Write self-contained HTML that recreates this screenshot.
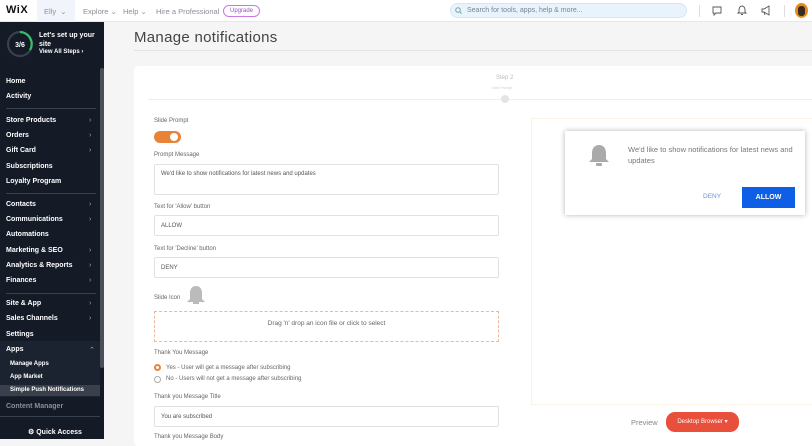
<!DOCTYPE html>
<html><head><meta charset="utf-8"><style>
*{box-sizing:border-box;margin:0;padding:0}
body{width:812px;height:439px;overflow:hidden;font-family:"Liberation Sans",sans-serif;background:#f5f5f5;position:relative}
.top{position:absolute;left:0;top:0;width:812px;height:22px;background:#fff;border-bottom:1px solid #e5e7ea;font-size:7.5px;color:#8a8f98}
.top span{position:absolute;top:7px}
.side{position:absolute;left:0;top:22px;width:104px;height:417px;background:#141a26;color:#fff;font-weight:bold;font-size:7px}
.side .it{position:absolute;left:6px}
.side .ch{position:absolute;left:89px;color:#9aa;font-weight:normal}
.side .ln{position:absolute;left:6px;width:90px;height:1px;background:#3a414e}
.sb{position:absolute;left:100px;top:45px;width:4px;height:300px;background:#4a505a;border-radius:2px}
.lbl{position:absolute;left:154px;font-size:6px;color:#666}
.inp{position:absolute;left:154px;width:345px;height:21px;border:1px solid #e2e2e2;border-radius:2px;background:#fff;font-size:6px;color:#555;padding:7px 6px}
.g{position:absolute;left:0;top:1px;width:104px;height:417px}
</style></head><body>
<div class="top">
<span style="left:6px;top:4px;font-size:11px;font-weight:bold;color:#111;letter-spacing:.5px">WiX</span>
<div style="position:absolute;left:37px;top:0;width:38px;height:22px;background:#f1f5fb"></div>
<span style="left:44px">Elly &nbsp;⌄</span>
<span style="left:83px">Explore ⌄</span>
<span style="left:123px">Help ⌄</span>
<span style="left:156px">Hire a Professional</span>
<span style="left:223px;top:5px;border:1px solid #c67ae0;color:#a04cc6;border-radius:7px;padding:2px 6px;font-size:6px">Upgrade</span>
<div style="position:absolute;left:450px;top:3px;width:237px;height:15px;background:#e9f3fd;border:1px solid #d5e6f8;border-radius:8px;font-size:7px;color:#7a8595;padding:3px 0 0 16px">Search for tools, apps, help &amp; more...</div>
<svg style="position:absolute;left:455px;top:7px" width="7" height="7"><circle cx="3" cy="3" r="2.3" fill="none" stroke="#7a9" stroke-width="1"/><line x1="5" y1="5" x2="6.5" y2="6.5" stroke="#7a9"/></svg>
<div style="position:absolute;left:699px;top:5px;width:1px;height:12px;background:#ddd"></div>
<svg style="position:absolute;left:712px;top:6px" width="10" height="10"><path d="M1 1h8v6H4L2 9V7H1z" fill="none" stroke="#555" stroke-width=".9"/></svg>
<svg style="position:absolute;left:737px;top:5px" width="10" height="11"><path d="M5 1C3 1 2 3 2 5v2L1 8h8L8 7V5C8 3 7 1 5 1zM4 9.5h2" fill="none" stroke="#555" stroke-width=".9"/></svg>
<svg style="position:absolute;left:761px;top:5px" width="10" height="11"><path d="M1 4h2l5-3v9L3 7H1zM3 7l1 3" fill="none" stroke="#555" stroke-width=".9"/></svg>
<div style="position:absolute;left:784px;top:5px;width:1px;height:12px;background:#ddd"></div>
<div style="position:absolute;left:795px;top:3px;width:13px;height:15px;border-radius:50%;background:#e58a1e"><div style="margin:3px 3px;width:7px;height:10px;background:#3a2a20;border-radius:3px"></div></div>
</div>
<div class="side"><div class="g">
<svg style="position:absolute;left:6px;top:7px" width="28" height="28"><circle cx="14" cy="14" r="12" fill="none" stroke="#3a414e" stroke-width="2.2"/><path d="M14 2A12 12 0 0 1 24 20" fill="none" stroke="#35c06a" stroke-width="2.2"/><text x="14" y="17" font-size="7" fill="#fff" text-anchor="middle" font-family="Liberation Sans" font-weight="bold">3/6</text></svg>
<div class="it" style="left:39px;top:8px;font-size:7px;line-height:9px">Let's set up your<br>site</div>
<div class="it" style="left:39px;top:26px;font-size:6px">View All Steps ›</div>
<div class="sb"></div>
<div class="it" style="top:55px">Home</div>
<div class="it" style="top:70px">Activity</div>
<div class="ln" style="top:85px"></div>
<div class="it" style="top:94px">Store Products</div><div class="ch" style="top:94px">›</div>
<div class="it" style="top:109px">Orders</div><div class="ch" style="top:109px">›</div>
<div class="it" style="top:124px">Gift Card</div><div class="ch" style="top:124px">›</div>
<div class="it" style="top:140px">Subscriptions</div>
<div class="it" style="top:155px">Loyalty Program</div>
<div class="ln" style="top:170px"></div>
<div class="it" style="top:178px">Contacts</div><div class="ch" style="top:178px">›</div>
<div class="it" style="top:193px">Communications</div><div class="ch" style="top:193px">›</div>
<div class="it" style="top:208px">Automations</div>
<div class="it" style="top:224px">Marketing &amp; SEO</div><div class="ch" style="top:224px">›</div>
<div class="it" style="top:239px">Analytics &amp; Reports</div><div class="ch" style="top:239px">›</div>
<div class="it" style="top:254px">Finances</div><div class="ch" style="top:254px">›</div>
<div class="ln" style="top:270px"></div>
<div class="it" style="top:277px">Site &amp; App</div><div class="ch" style="top:277px">›</div>
<div class="it" style="top:292px">Sales Channels</div><div class="ch" style="top:292px">›</div>
<div class="it" style="top:308px">Settings</div>
<div style="position:absolute;left:0;top:318px;width:100px;height:56px;background:#1c2330"></div>
<div class="it" style="top:323px">Apps</div><div class="ch" style="top:323px">⌃</div>
<div class="it" style="left:10px;top:338px;font-size:6px">Manage Apps</div>
<div class="it" style="left:10px;top:351px;font-size:6px">App Market</div>
<div style="position:absolute;left:0;top:362px;width:100px;height:11px;background:#3a404b"></div>
<div class="it" style="left:10px;top:364px;font-size:6px">Simple Push Notifications</div>
<div class="it" style="top:380px;color:#8a909a">Content Manager</div>
<div class="ln" style="top:393px;width:100px;left:0"></div>
<div class="it" style="left:28px;top:405px">⚙ Quick Access</div>
</div></div>
<div style="position:absolute;left:134px;top:29px;font-size:15px;color:#444;letter-spacing:.3px">Manage notifications</div>
<div style="position:absolute;left:134px;top:50px;width:678px;height:1px;background:#e3e3e3"></div>
<div style="position:absolute;left:134px;top:66px;width:690px;height:380px;background:#fff;border-radius:4px"></div>
<div style="position:absolute;left:148px;top:99px;width:664px;height:1px;background:#eee"></div>
<div style="position:absolute;left:496px;top:75px;font-size:6px;color:#bbb">Step 2</div>
<div style="position:absolute;left:492px;top:86px;font-size:3.5px;color:#ccc">User Prompt</div>
<div style="position:absolute;left:501px;top:95px;width:8px;height:8px;border-radius:50%;background:#e4e4e4"></div>
<div class="lbl" style="top:118px">Slide Prompt</div>
<div style="position:absolute;left:154px;top:131px;width:27px;height:12px;border-radius:6px;background:#e8833a"><div style="position:absolute;left:16px;top:2px;width:8px;height:8px;border-radius:50%;background:#fff"></div></div>
<div class="lbl" style="top:152px">Prompt Message</div>
<div class="inp" style="top:164px;height:31px;padding-top:6px">We'd like to show notifications for latest news and updates</div>
<div class="lbl" style="top:204px">Text for 'Allow' button</div>
<div class="inp" style="top:215px">ALLOW</div>
<div class="lbl" style="top:246px">Text for 'Decline' button</div>
<div class="inp" style="top:257px">DENY</div>
<div class="lbl" style="top:295px">Slide Icon</div>
<svg style="position:absolute;left:186px;top:285px" width="20" height="20"><path d="M10 1C6 1 4 4 4 8v6l-3 3h18l-3-3V8c0-4-2-7-6-7z" fill="#bbb"/><rect x="7" y="17" width="6" height="2" fill="#bbb"/></svg>
<div style="position:absolute;left:154px;top:311px;width:345px;height:31px;border:1px dashed #f0b89a;font-size:6.5px;color:#666;text-align:center;padding-top:8px">Drag 'n' drop an icon file or click to select</div>
<div class="lbl" style="top:350px">Thank You Message</div>
<div style="position:absolute;left:154px;top:364px;width:7px;height:7px;border-radius:50%;border:2px solid #e8833a"></div>
<div class="lbl" style="left:166px;top:365px">Yes - User will get a message after subscribing</div>
<div style="position:absolute;left:154px;top:376px;width:7px;height:7px;border-radius:50%;border:1px solid #aaa"></div>
<div class="lbl" style="left:166px;top:376px">No - Users will not get a message after subscribing</div>
<div class="lbl" style="top:394px">Thank you Message Title</div>
<div class="inp" style="top:406px">You are subscribed</div>
<div class="lbl" style="top:434px">Thank you Message Body</div>
<div style="position:absolute;left:531px;top:118px;width:281px;height:287px;border:1px solid #fbf3e8;border-right:none"></div>
<div style="position:absolute;left:565px;top:131px;width:240px;height:84px;background:#fff;box-shadow:0 0 5px rgba(0,0,0,.3)"></div>
<svg style="position:absolute;left:588px;top:144px" width="22" height="24"><path d="M11 1C7 1 4 4 4 9v6l-3 3h20l-3-3V9c0-5-3-8-7-8z" fill="#aaa"/><rect x="8" y="19" width="6" height="3" rx="1" fill="#aaa"/></svg>
<div style="position:absolute;left:628px;top:144px;width:170px;font-size:7.5px;color:#777;line-height:11px">We'd like to show notifications for latest news and updates</div>
<div style="position:absolute;left:703px;top:193px;font-size:6.5px;color:#6c8fd8">DENY</div>
<div style="position:absolute;left:742px;top:187px;width:53px;height:21px;background:#0e5fe6;color:#fff;font-size:7px;font-weight:bold;text-align:center;padding-top:7px">ALLOW</div>
<div style="position:absolute;left:631px;top:418px;font-size:7.5px;color:#888">Preview</div>
<div style="position:absolute;left:666px;top:412px;width:73px;height:20px;border-radius:9px;background:#e8503c;color:#fff;font-size:6px;text-align:center;padding-top:6px">Desktop Browser ▾</div>
</body></html>
